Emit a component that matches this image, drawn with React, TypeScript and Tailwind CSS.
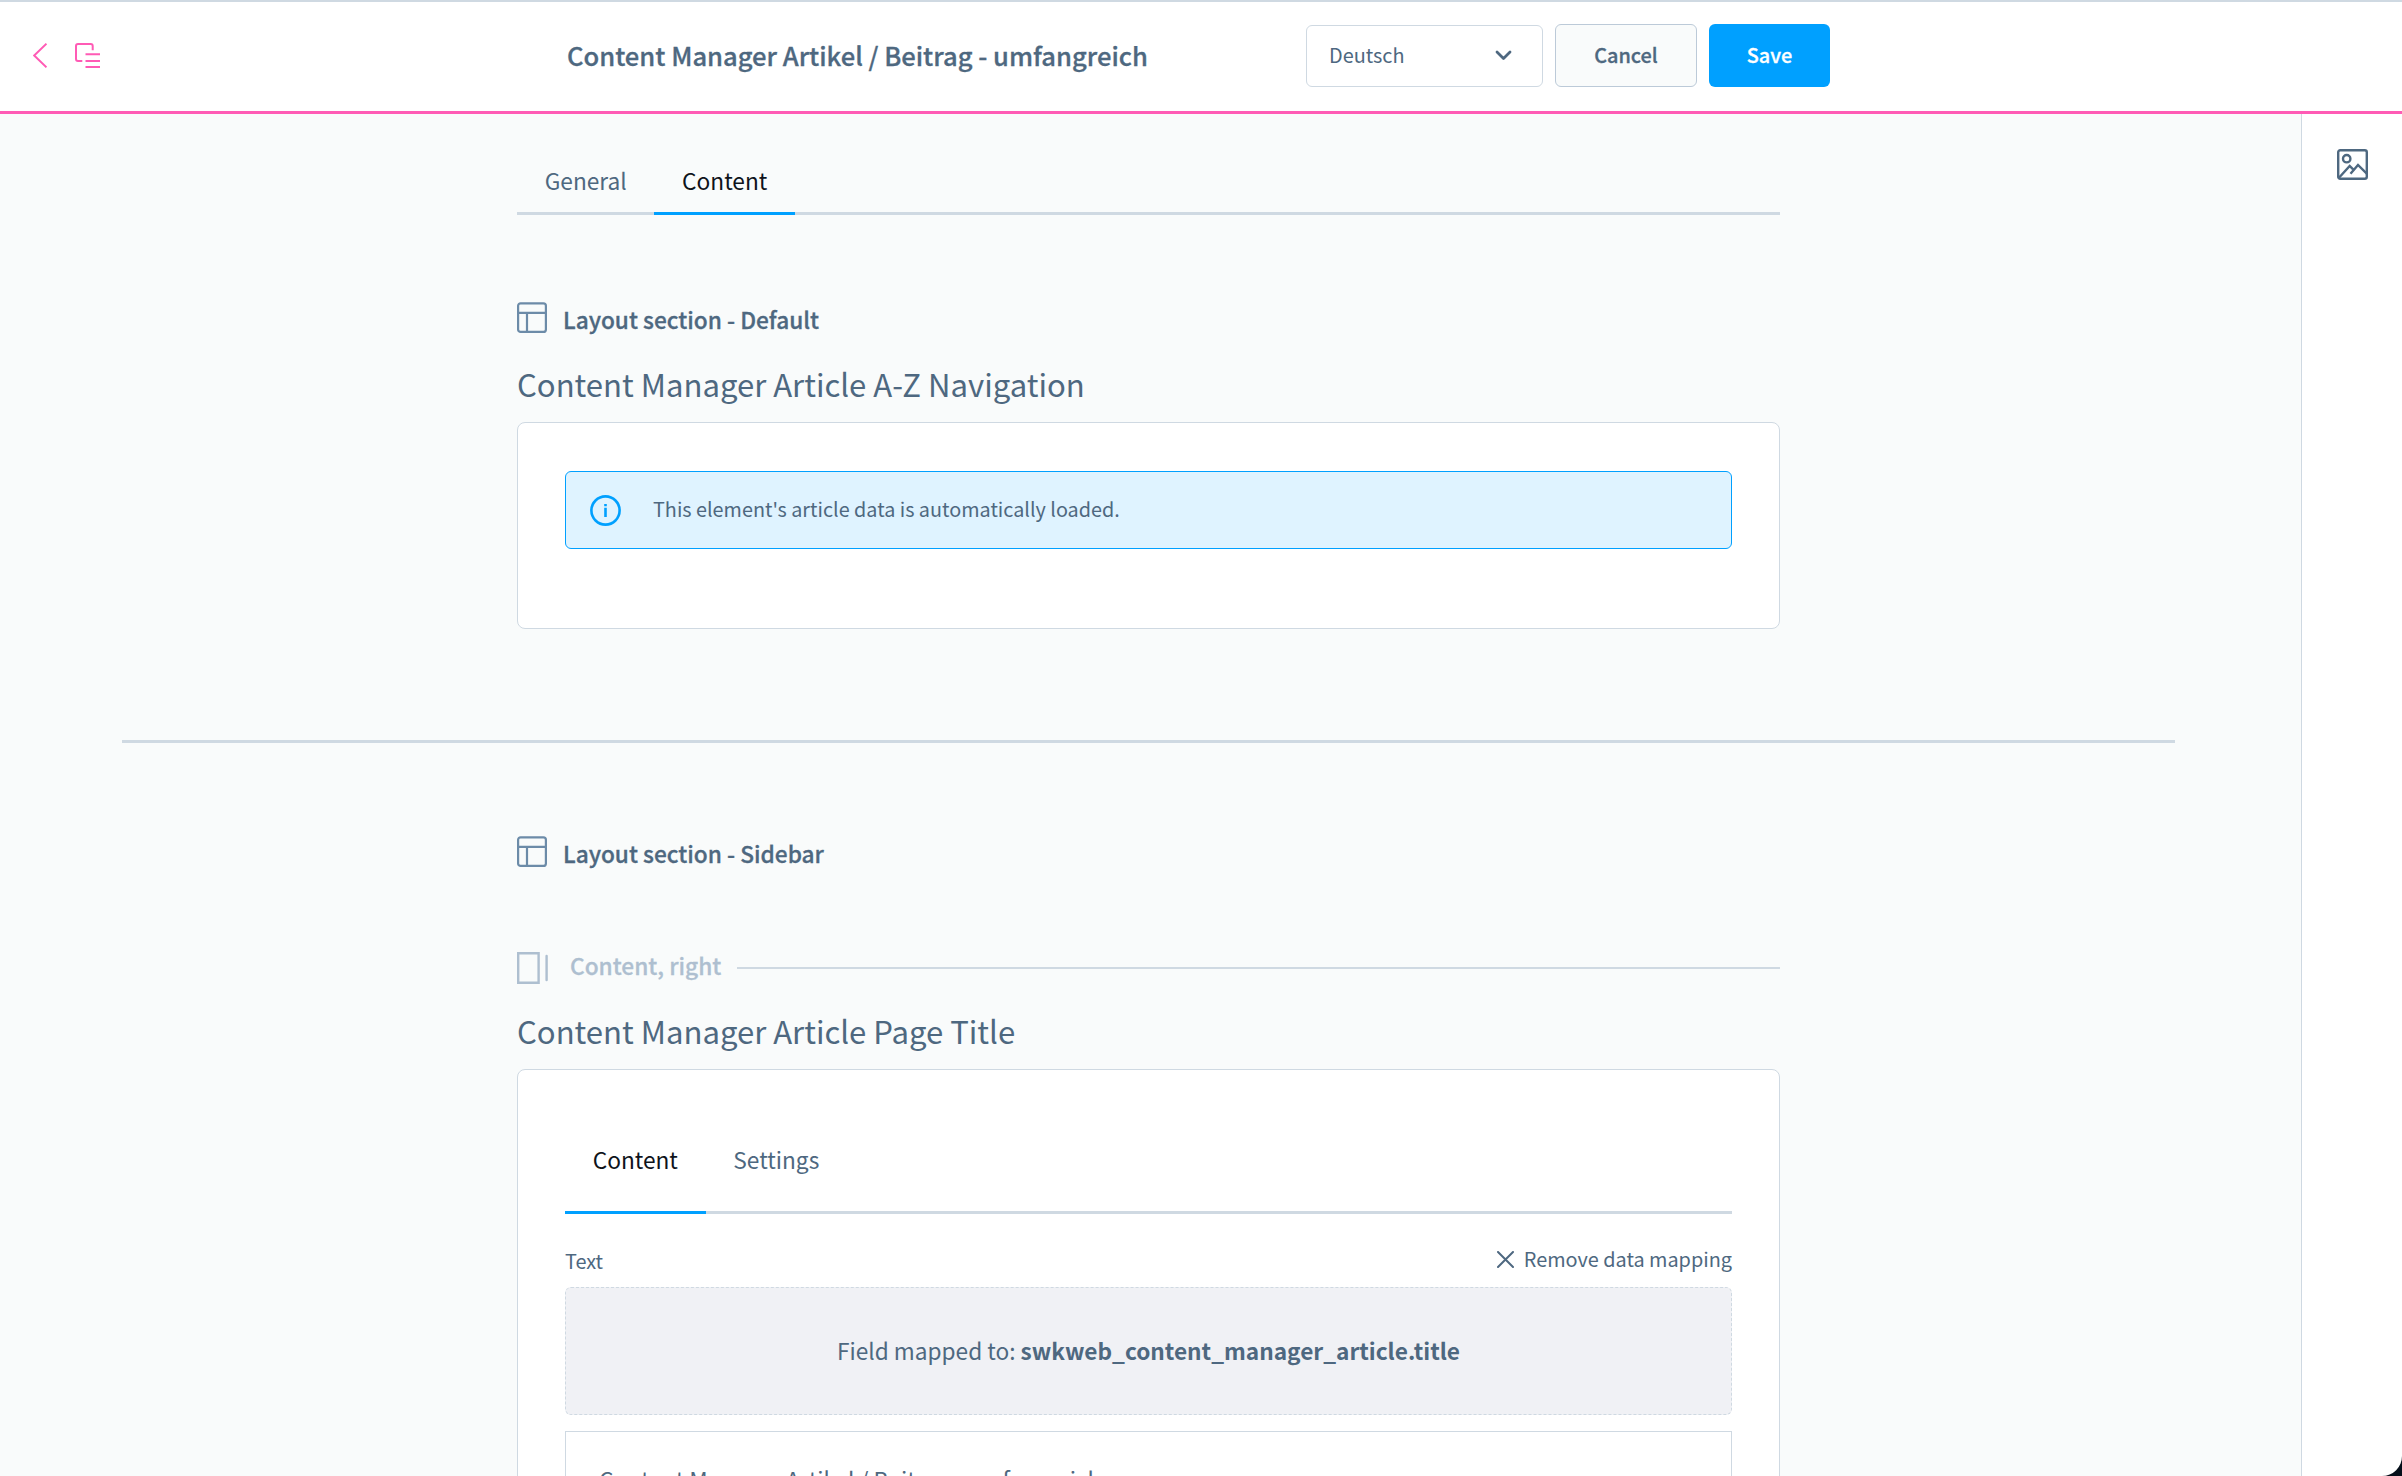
import type { ReactNode } from 'react';
import clsx from 'clsx';

const ARTICLE_TITLE = 'Content Manager Artikel / Beitrag - umfangreich';

function LayoutIcon() {
  return (
    <svg width="30" height="31" viewBox="0 0 30 31" fill="none" stroke="#6c8ba8" strokeWidth="2.2">
      <rect x="1.1" y="1.3" width="27.8" height="28.6" rx="2.5" />
      <path d="M1 10.8h28M10 10.8V30" />
    </svg>
  );
}

function SectionTitle({ children }: { children: ReactNode }) {
  return (
    <div className="flex h-[31px] items-center gap-4">
      <LayoutIcon />
      <span className="pt-1 text-[22.7px] leading-[29px] font-medium [-webkit-text-stroke:0.3px]">{children}</span>
    </div>
  );
}

function Tab({ label, active, className }: { label: string; active?: boolean; className: string }) {
  return (
    <button
      className={clsx(
        '-mb-[3px] border-b-[3px] px-[27.7px] text-[22.7px]',
        active ? 'border-[#00a0ff] text-[#0e131a]' : 'border-transparent',
        className
      )}
    >
      {label}
    </button>
  );
}

export default function App() {
  return (
    <div className="relative flex h-[1476px] flex-col overflow-hidden bg-[#f9fbfb] font-['Noto_Sans_CJK_SC',sans-serif] text-[#4e6880]">
      {/* Header */}
      <header className="flex h-[114px] shrink-0 items-center border-t-2 border-b-[3px] border-t-[#cfd9e2] border-b-[#ff5bb5] bg-white">
        <div className="flex w-[567px] items-center gap-[28px] pb-0.5 pl-[33px]">
          <svg width="14" height="25" viewBox="0 0 14 25" fill="none" stroke="#ff5bb5" strokeWidth="2">
            <path d="M13.5 0.7L1.2 12.5l12.3 11.8" />
          </svg>
          <svg width="25" height="25" viewBox="0 0 25 25" fill="none" stroke="#ff5bb5" strokeWidth="2">
            <path d="M17.7 7.3V3a2 2 0 0 0-2-2H3a2 2 0 0 0-2 2v13a2 2 0 0 0 2 2h4.3" />
            <path d="M10.5 11.3H25M10.5 18H25M10.5 24H25" />
          </svg>
        </div>
        <h1 className="w-[739px] pb-[3px] text-[25.57px] leading-8 font-medium whitespace-nowrap [-webkit-text-stroke:0.3px]">
          {ARTICLE_TITLE}
        </h1>
        <div className="flex items-end gap-3 pb-0.5 text-[19.87px] leading-7">
          <div className="flex h-[62px] w-[237px] items-center justify-between rounded-md border border-[#cfd9e2] bg-white pr-[30px] pb-0.5 pl-[22px]">
            <span>Deutsch</span>
            <svg width="17" height="11" viewBox="0 0 17 11" fill="none" stroke="currentColor" strokeWidth="2.8" strokeLinecap="round" strokeLinejoin="round">
              <path d="M2 2l6.5 6.5L15 2" />
            </svg>
          </div>
          <button className="h-[63px] w-[142px] rounded-md border border-[#bccad8] bg-[#f9fbfb] pb-px font-medium [-webkit-text-stroke:0.3px]">
            Cancel
          </button>
          <button className="h-[63px] w-[121px] rounded-md bg-[#00a0ff] pb-px font-medium text-white [-webkit-text-stroke:0.3px]">
            Save
          </button>
        </div>
      </header>

      <div className="flex min-h-0 flex-1">
        <main className="flex flex-1 flex-col items-center overflow-hidden pr-1">
          <div className="w-[1263px] shrink-0">
            <nav className="mt-[34px] flex h-[67px] border-b-[3px] border-[#cfd9e2]">
              <Tab label="General" className="h-[67px] pt-0.5" />
              <Tab label="Content" active className="h-[67px] pt-0.5" />
            </nav>

            <div className="mt-[87px]">
              <SectionTitle>Layout section - Default</SectionTitle>
            </div>
            <h2 className="mt-[29px] mb-4 text-[31.08px] leading-[44px]">Content Manager Article A-Z Navigation</h2>
            <div className="h-[207px] rounded-lg border border-[#cfd9e2] bg-white px-[47px] pt-12">
              <div className="flex h-[78px] items-center gap-8 rounded-md border border-[#00a0ff] bg-[#dff3ff] pl-6">
                <svg width="31" height="31" viewBox="0 0 31 31" fill="none" stroke="#00a0ff" strokeWidth="2.6">
                  <circle cx="15.5" cy="15.5" r="14.1" />
                  <path d="M15.5 9v2.2M15.5 12.7v9.3" />
                </svg>
                <span className="pb-0.5 text-[19.81px]">This element's article data is automatically loaded.</span>
              </div>
            </div>
          </div>

          <hr className="mt-[111px] h-[3px] w-[2053px] shrink-0 border-0 bg-[#cfd9e2]" />

          <div className="w-[1263px] shrink-0">
            <div className="mt-[93px]">
              <SectionTitle>Layout section - Sidebar</SectionTitle>
            </div>

            <div className="mt-[85px] flex h-8 items-center">
              <svg width="31" height="32" viewBox="0 0 31 32" fill="none" stroke="#aebfd0" strokeWidth="2.4">
                <path d="M1.2 1.2h20.4v29.6H1.2z" />
                <path d="M29.6 4v24" strokeLinecap="round" />
              </svg>
              <span className="mr-4 ml-[22px] pb-[5px] text-[22.7px] leading-[29px] font-medium text-[#aebfd0] [-webkit-text-stroke:0.3px]">
                Content, right
              </span>
              <div className="mb-px h-0.5 flex-1 bg-[#cfd9e2]" />
            </div>

            <h2 className="mt-[25px] mb-4 text-[31.08px] leading-[44px]">Content Manager Article Page Title</h2>
            <div className="h-[600px] rounded-lg border border-[#cfd9e2] bg-white px-[47px] pt-12">
              <nav className="flex h-24 border-b-[3px] border-[#cfd9e2]">
                <Tab label="Content" active className="h-24 pb-[9px]" />
                <Tab label="Settings" className="h-24 pb-[9px]" />
              </nav>

              <div className="mt-[31px] mb-[14px] flex h-7 items-center justify-between text-[19.87px] leading-7">
                <label className="pt-1">Text</label>
                <button className="flex items-center gap-[10px]">
                  <svg width="17" height="17" viewBox="0 0 17 17" fill="none" stroke="currentColor" strokeWidth="2" strokeLinecap="round">
                    <path d="M1 1l15 15M16 1L1 16" />
                  </svg>
                  Remove data mapping
                </button>
              </div>

              <div className="flex h-32 items-center justify-center rounded-md border border-dashed border-[#cfd9e2] bg-[#f0f1f5] text-[22.65px]">
                <p>
                  Field mapped to: <strong>swkweb_content_manager_article.title</strong>
                </p>
              </div>

              <div className="mt-4 h-40 border border-[#cfd9e2] px-[33px] pt-[33px] text-[22.7px] leading-[30px]">
                {ARTICLE_TITLE}
              </div>
            </div>
          </div>
        </main>

        {/* Sidebar */}
        <aside className="w-[101px] shrink-0 border-l border-[#cfd9e2] bg-white pt-[35px] pl-[35px]">
          <svg width="31" height="31" viewBox="0 0 31 31" fill="none" stroke="currentColor" strokeWidth="2.4">
            <rect x="1.2" y="1.2" width="28.6" height="28.6" rx="2" />
            <circle cx="9.7" cy="9.7" r="3.7" />
            <path d="M1.5 29.3L12.7 17l3.2 3.2M13.5 24.7L21 16l9 8.8" />
          </svg>
        </aside>
      </div>

      {/* Rounded window corner */}
      <svg className="absolute right-0 bottom-0" width="20" height="20" viewBox="0 0 20 20">
        <path d="M20 0A20 20 0 0 1 0 20h20z" fill="#050f1a" />
      </svg>
    </div>
  );
}
